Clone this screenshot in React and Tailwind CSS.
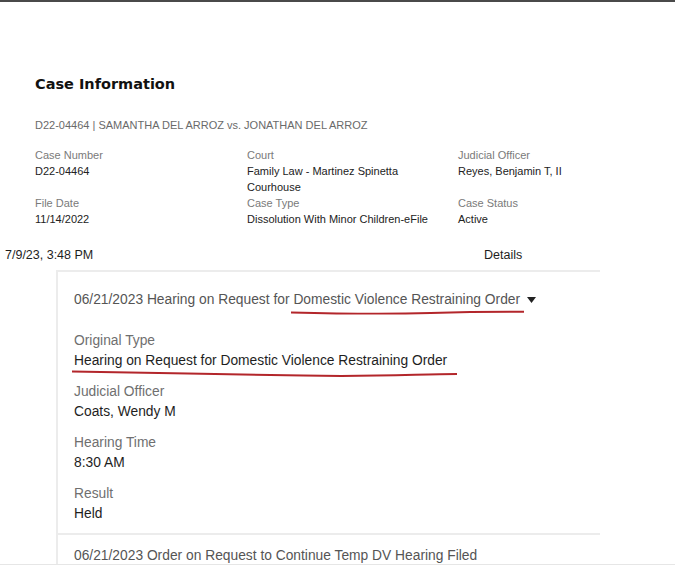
import React from 'react';

const caseFields = [
  [
    { label: 'Case Number', value: 'D22-04464' },
    { label: 'Court', value: 'Family Law - Martinez Spinetta Courhouse' },
    { label: 'Judicial Officer', value: 'Reyes, Benjamin T, II' },
  ],
  [
    { label: 'File Date', value: '11/14/2022' },
    { label: 'Case Type', value: 'Dissolution With Minor Children-eFile' },
    { label: 'Case Status', value: 'Active' },
  ],
];

const hearingFields = [
  { label: 'Judicial Officer', value: 'Coats, Wendy M' },
  { label: 'Hearing Time', value: '8:30 AM' },
  { label: 'Result', value: 'Held' },
];

// hand-drawn red marker stroke under a phrase
function Scribble({ d, className }) {
  return (
    <svg
      className={`pointer-events-none absolute ${className}`}
      viewBox="0 0 100 10"
      preserveAspectRatio="none"
    >
      <path d={d} fill="none" stroke="#b3262b" strokeWidth="2" strokeLinecap="round" vectorEffect="non-scaling-stroke" />
    </svg>
  );
}

export default function App() {
  return (
    <div className="relative w-[675px] h-[565px] overflow-hidden bg-white border-t-2 border-t-[#4a4a4a] border-b border-b-[#e6e6e6] font-['Liberation_Sans',Arial,sans-serif]">
      <section className="pl-[35px] pt-[72px]">
        <h1 className="font-['DejaVu_Sans',Verdana,sans-serif] font-bold text-[14.5px] leading-[20px] text-[#111]">
          Case Information
        </h1>
        <p className="mt-[23px] text-[11px] leading-[16px] text-[#6a6a6a]">
          D22-04464 | SAMANTHA DEL ARROZ vs. JONATHAN DEL ARROZ
        </p>
        <div className="mt-[14px] flex flex-col">
          {caseFields.map((row, i) => (
            <div key={i} className="grid grid-cols-[212px_211px_1fr] text-[11px] leading-[16px]">
              {row.map((f) => (
                <div key={f.label}>
                  <div className="text-[#7a7a7a]">{f.label}</div>
                  <div className="w-[195px] text-[#222]">{f.value}</div>
                </div>
              ))}
            </div>
          ))}
        </div>
      </section>

      <div className="mt-[20px] flex text-[12.5px] leading-[16px] text-[#1e1e1e]">
        <span className="pl-[5px] w-[484px]">7/9/23, 3:48 PM</span>
        <span>Details</span>
      </div>

      <div className="ml-[56px] mt-[7px] w-[544px] border-l-2 border-t-2 border-[#ececec]">
        <div className="pl-[16px] pt-[18px] pb-[9px] text-[13.8px] leading-[20px]">
          <div className="flex items-center text-[#555]">
            <span>06/21/2023 Hearing on Request for&nbsp;</span>
            <span className="relative">
              Domestic Violence Restraining Order
              <Scribble className="left-[-2px] w-[calc(100%+6px)] bottom-[-6px] h-[6px]" d="M0 4 C 20 6, 40 7, 60 5 S 90 3, 100 3" />
            </span>
            <svg className="ml-[7px]" width="9" height="6" viewBox="0 0 9 6">
              <path d="M0 0 H9 L4.5 6 Z" fill="#222" />
            </svg>
          </div>

          <div className="mt-[21px]">
            <div className="text-[#6f6f6f]">Original Type</div>
            <div className="relative inline-block text-[#1e1e1e]">
              Hearing on Request for Domestic Violence Restraining Order
              <Scribble className="left-[-2px] w-[calc(100%+12px)] bottom-[-7px] h-[8px]" d="M0 2 C 20 4, 40 5, 60 7 S 90 5, 100 5" />
            </div>
          </div>

          {hearingFields.map((f) => (
            <div key={f.label} className="mt-[11px]">
              <div className="text-[#6f6f6f]">{f.label}</div>
              <div className="text-[#1e1e1e]">{f.value}</div>
            </div>
          ))}
        </div>

        <div className="border-t-2 border-[#ececec] pl-[16px] pt-[11px] text-[13.8px] leading-[20px] text-[#555]">
          06/21/2023 Order on Request to Continue Temp DV Hearing Filed
        </div>
      </div>
    </div>
  );
}
